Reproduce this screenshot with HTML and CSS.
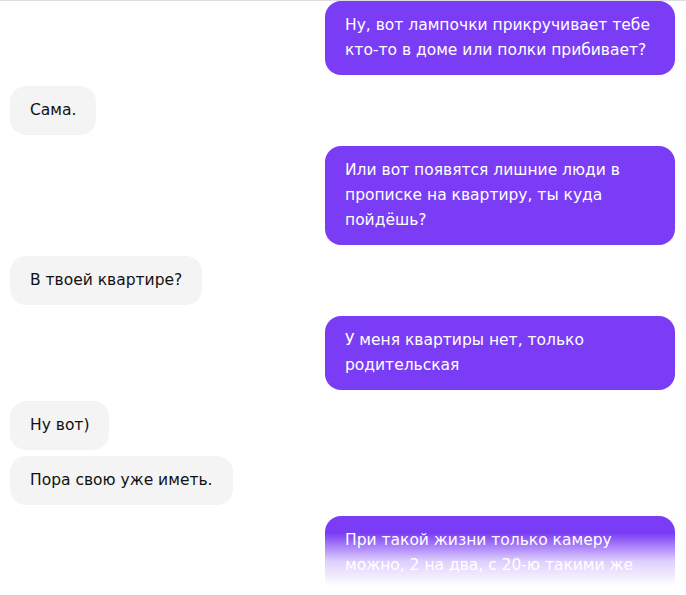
FILE: index.html
```html
<!DOCTYPE html>
<html lang="ru">
<head>
<meta charset="utf-8">
<link rel="stylesheet" href="styles.css">
</head>
<body>
<div class="chat">
  <div class="msg out">Ну, вот лампочки прикручивает тебе кто-то в доме или полки прибивает?</div>
  <div class="msg in">Сама.</div>
  <div class="msg out">Или вот появятся лишние люди в прописке на квартиру, ты куда пойдёшь?</div>
  <div class="msg in">В твоей квартире?</div>
  <div class="msg out">У меня квартиры нет, только родительская</div>
  <div class="msg in">Ну вот)</div>
  <div class="msg in same">Пора свою уже иметь.</div>
  <div class="msg out">При такой жизни только камеру можно, 2 на два, с 20-ю такими же людьми.</div>
</div>
<div class="fade"></div>
</body>
</html>
```
FILE: styles.css
```css
html, body {
  margin: 0;
  background: #fff;
  height: 595px;
  overflow: hidden;
}
.chat {
  border-top: 1px solid #dedede;
  padding: 0 11px 0 10px;
  display: flex;
  flex-direction: column;
  font-family: "DejaVu Sans", sans-serif;
  font-size: 15.5px;
  line-height: 25px;
}
.msg {
  box-sizing: border-box;
  max-width: 350px;
  padding: 12px 20px;
  border-radius: 16px;
  margin-top: 11px;
}
.msg:first-child {
  margin-top: 0;
}
.msg.same {
  margin-top: 6px;
}
.out {
  align-self: flex-end;
  width: 350px;
  background: #7b3cf6;
  color: #fff;
}
.in {
  align-self: flex-start;
  background: #f4f4f4;
  color: #111;
}
.fade {
  position: fixed;
  left: 0;
  right: 0;
  bottom: 0;
  height: 62px;
  background: linear-gradient(rgba(255,255,255,0), rgba(255,255,255,0.75) 45%, #fff 85%);
}
```
